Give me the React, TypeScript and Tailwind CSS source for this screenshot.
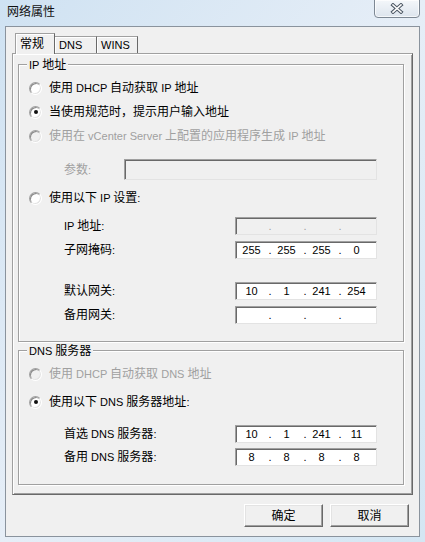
import { Fragment } from 'react';

// renders ASCII runs a bit smaller, like Tahoma 8pt next to SimSun 9pt
function T({ s }: { s: string }) {
  const parts = s.split(/([\x20-\x7e]+)/);
  return (
    <>
      {parts.map((p, i) =>
        /[\x20-\x7e]/.test(p) ? (
          <span key={i} className="text-[11px]">{p}</span>
        ) : (
          <Fragment key={i}>{p}</Fragment>
        )
      )}
    </>
  );
}

function Radio({ checked, disabled }: { checked?: boolean; disabled?: boolean }) {
  return (
    <span
      className={`w-[13px] h-[13px] shrink-0 rounded-full border border-t-[#a0a0a0] border-l-[#a0a0a0] border-r-white border-b-white flex items-center justify-center shadow-[inset_1px_1px_0_#8a8a8a,inset_-1px_-1px_0_#e3e3e3] ${
        disabled ? 'bg-[#f0f0f0]' : 'bg-white'
      }`}
    >
      {checked && <span className="w-[4px] h-[4px] rounded-full bg-[#111]" />}
    </span>
  );
}

function RadioRow({ label, checked, disabled }: { label: string; checked?: boolean; disabled?: boolean }) {
  return (
    <div className={`flex items-center h-[24px] pl-[10px] gap-[7px] ${disabled ? 'text-[#a0a0a0]' : 'text-black'}`}>
      <Radio checked={checked} disabled={disabled} />
      <span className="whitespace-nowrap"><T s={label} /></span>
    </div>
  );
}

function IpBox({ v, disabled }: { v?: string[]; disabled?: boolean }) {
  const vals = v ?? ['', '', '', ''];
  return (
    <div
      className={`w-[142px] h-[18px] flex items-center pl-[2px] border border-t-[#a0a0a0] border-l-[#a0a0a0] border-r-[#e3e3e3] border-b-[#e3e3e3] shadow-[inset_1px_1px_0_#696969] text-[11px] leading-none ${
        disabled ? 'bg-[#f0f0f0] text-[#a0a0a0]' : 'bg-white text-black'
      }`}
    >
      {vals.map((x, i) => (
        <Fragment key={i}>
          <span className="w-[29px] pr-[2px] text-center">{x}</span>
          {i < 3 && <span className="w-[6px] text-center">.</span>}
        </Fragment>
      ))}
    </div>
  );
}

function IpRow({ label, v, disabled, className = '' }: { label: string; v?: string[]; disabled?: boolean; className?: string }) {
  return (
    <div className={`flex items-center h-[18px] pl-[45px] ${className}`}>
      <span className="w-[171px] whitespace-nowrap"><T s={label} /></span>
      <IpBox v={v} disabled={disabled} />
    </div>
  );
}

function GroupBox({ title, className = '', children }: { title: string; className?: string; children: React.ReactNode }) {
  return (
    <div className={`border border-[#a0a0a0] shadow-[inset_1px_1px_0_#fff,1px_1px_0_#fff] ${className}`}>
      <div className="-mt-[7px] ml-[8px] px-[2px] w-fit leading-[14px] bg-[#f0f0f0] whitespace-nowrap">
        <T s={title} />
      </div>
      {children}
    </div>
  );
}

function Btn({ label }: { label: string }) {
  return (
    <button className="w-[79px] h-[23px] bg-[#f0f0f0] border border-t-white border-l-white border-r-[#696969] border-b-[#696969] shadow-[inset_-1px_-1px_0_#a0a0a0,inset_1px_1px_0_#e3e3e3] text-[12px] text-black">
      {label}
    </button>
  );
}

export default function App() {
  return (
    <div className="w-[425px] h-[542px] flex flex-col overflow-hidden bg-gradient-to-br from-[#cfe2f2] via-[#e6eef7] to-[#d4e6f3] font-['Liberation_Sans','Noto_Sans_CJK_SC',sans-serif] text-[12px] text-black">
      {/* title bar */}
      <div className="h-[26px] flex items-start justify-between">
        <span className="pl-[7px] pt-[4px] leading-[17px] text-[#111]">网络属性</span>
        <div className="mr-[5px] -mt-px w-[46px] h-[19px] rounded-b-[4px] border border-[#7d8894] bg-gradient-to-b from-[#f4f7fa] to-[#dde5ee] shadow-[inset_0_0_0_1px_rgba(255,255,255,0.7)] flex items-center justify-center">
          <svg width="14" height="11" viewBox="0 0 14 11">
            <path d="M3 2 L11 9 M11 2 L3 9" stroke="#4b5663" strokeWidth="3.6" strokeLinecap="square" />
            <path d="M3 2 L11 9 M11 2 L3 9" stroke="#fdfdfd" strokeWidth="1.6" strokeLinecap="square" />
          </svg>
        </div>
      </div>

      {/* client area */}
      <div className="mx-[5px] mb-[5px] flex-1 border border-[#8a939d] bg-[#f0f0f0] px-[6px] flex flex-col">
        {/* tab strip */}
        <div className="mt-[6px] h-[20px] flex items-end pl-[3px]">
          <div className="relative z-10 -mb-px w-[40px] h-[21px] pl-[4px] flex items-center bg-[#f0f0f0] border border-b-0 border-t-[#a0a0a0] border-l-[#a0a0a0] border-r-[#696969] shadow-[inset_1px_1px_0_#fff]">
            常规
          </div>
          <div className="w-[42px] h-[17px] pl-[4px] flex items-center bg-[#f0f0f0] border border-b-0 border-l-0 border-t-[#a0a0a0] border-r-[#696969] shadow-[inset_1px_1px_0_#fff] text-[11px]">
            DNS
          </div>
          <div className="w-[41px] h-[17px] pl-[4px] flex items-center bg-[#f0f0f0] border border-b-0 border-l-0 border-t-[#a0a0a0] border-r-[#696969] shadow-[inset_1px_1px_0_#fff] text-[11px]">
            WINS
          </div>
        </div>

        {/* tab panel */}
        <div className="h-[442px] border border-t-[#a0a0a0] border-l-[#a0a0a0] border-r-[#696969] border-b-[#696969] shadow-[inset_1px_1px_0_#fff,inset_-1px_-1px_0_#a0a0a0] pt-[10px] pl-[5px] pr-[8px]">
          <GroupBox title="IP 地址" className="pb-[17px]">
            <div className="mt-[4px]">
              <RadioRow label="使用 DHCP 自动获取 IP 地址" />
              <RadioRow label="当使用规范时，提示用户输入地址" checked />
              <RadioRow label="使用在 vCenter Server 上配置的应用程序生成 IP 地址" disabled />
            </div>
            <div className="mt-[11px] h-[21px] flex items-center pl-[45px]">
              <span className="w-[60px] text-[#a0a0a0]"><T s="参数:" /></span>
              <div className="w-[253px] h-[21px] bg-[#f0f0f0] border border-t-[#a0a0a0] border-l-[#a0a0a0] border-r-[#e3e3e3] border-b-[#e3e3e3] shadow-[inset_1px_1px_0_#696969]" />
            </div>
            <div className="mt-[8px] h-[20px] flex items-center pl-[10px] gap-[7px]">
              <Radio />
              <span><T s="使用以下 IP 设置:" /></span>
            </div>
            <IpRow label="IP 地址:" disabled className="mt-[9px]" />
            <IpRow label="子网掩码:" v={['255', '255', '255', '0']} className="mt-[6px]" />
            <IpRow label="默认网关:" v={['10', '1', '241', '254']} className="mt-[23px]" />
            <IpRow label="备用网关:" className="mt-[6px]" />
          </GroupBox>

          <GroupBox title="DNS 服务器" className="mt-[8px] pb-[18px]">
            <div className="mt-[4px]">
              <RadioRow label="使用 DHCP 自动获取 DNS 地址" disabled />
            </div>
            <div className="mt-[4px]">
              <RadioRow label="使用以下 DNS 服务器地址:" checked />
            </div>
            <IpRow label="首选 DNS 服务器:" v={['10', '1', '241', '11']} className="mt-[11px]" />
            <IpRow label="备用 DNS 服务器:" v={['8', '8', '8', '8']} className="mt-[5px]" />
          </GroupBox>
        </div>

        {/* dialog buttons */}
        <div className="mt-[9px] mr-[4px] flex justify-end gap-[7px]">
          <Btn label="确定" />
          <Btn label="取消" />
        </div>
      </div>
    </div>
  );
}
